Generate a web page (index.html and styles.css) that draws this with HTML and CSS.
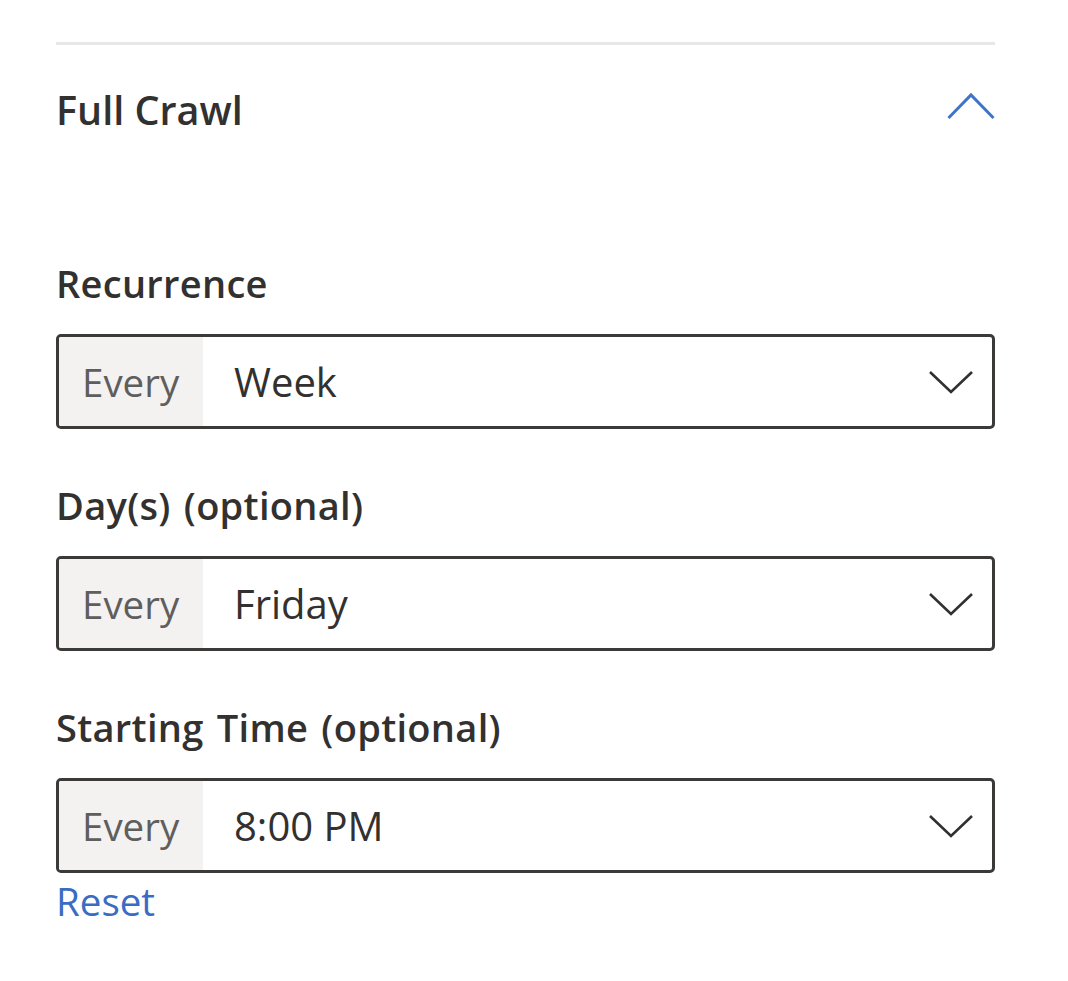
FILE: index.html
```html
<!DOCTYPE html>
<html lang="en">
<head>
<meta charset="utf-8">
<title>Full Crawl</title>
<link rel="stylesheet" href="styles.css">
</head>
<body>
<div class="panel">
  <div class="divider"></div>
  <div class="header">
    <h2 class="title">Full Crawl</h2>
    <button class="collapse" aria-label="Collapse">
      <svg width="48" height="28" viewBox="0 0 48 28"><path d="M1.5 26 L24 3 L46.5 26" fill="none" stroke="#3f74c9" stroke-width="3"/></svg>
    </button>
  </div>

  <div class="field first">
    <div class="label">Recurrence</div>
    <div class="select">
      <span class="prefix">Every</span>
      <span class="value">Week</span>
      <svg class="chev" width="44" height="24" viewBox="0 0 44 24"><path d="M1 2 L22 22 L43 2" fill="none" stroke="#323130" stroke-width="2.6"/></svg>
    </div>
  </div>

  <div class="field">
    <div class="label">Day(s) (optional)</div>
    <div class="select">
      <span class="prefix">Every</span>
      <span class="value">Friday</span>
      <svg class="chev" width="44" height="24" viewBox="0 0 44 24"><path d="M1 2 L22 22 L43 2" fill="none" stroke="#323130" stroke-width="2.6"/></svg>
    </div>
  </div>

  <div class="field">
    <div class="label">Starting Time (optional)</div>
    <div class="select">
      <span class="prefix">Every</span>
      <span class="value">8:00 PM</span>
      <svg class="chev" width="44" height="24" viewBox="0 0 44 24"><path d="M1 2 L22 22 L43 2" fill="none" stroke="#323130" stroke-width="2.6"/></svg>
    </div>
    <a class="reset" href="#">Reset</a>
  </div>
</div>
</body>
</html>
```
FILE: styles.css
```css
html, body {
  margin: 0;
  padding: 0;
  background: #ffffff;
}
body {
  font-family: "Open Sans", "Noto Sans", sans-serif;
  color: #323130;
}
.panel {
  width: 939px;
  margin-left: 56px;
  padding-top: 42px;
}
.divider {
  height: 3px;
  background: #e8e8e8;
}
.header {
  display: flex;
  align-items: center;
  justify-content: space-between;
  height: 130px;
}
.title {
  margin: 0;
  font-size: 39.5px;
  font-weight: 600;
  line-height: 56px;
}
.collapse {
  border: 0;
  padding: 0;
  background: none;
  display: flex;
  margin-top: -8px;
}
.field {
  display: flex;
  flex-direction: column;
  margin-top: 48px;
}
.field.first {
  margin-top: 80px;
}
.label {
  font-size: 38px;
  font-weight: 600;
  line-height: 57px;
  padding-bottom: 22px;
  word-spacing: 3px;
  letter-spacing: 0.3px;
}
.select {
  display: flex;
  align-items: stretch;
  height: 89px;
  border: 3px solid #3b3a39;
  border-radius: 5px;
  overflow: hidden;
}
.prefix {
  display: flex;
  align-items: center;
  padding: 0 24px 0 23px;
  width: 97px;
  background: #f3f2f1;
  color: #605e5c;
  font-size: 38.5px;
}
.value {
  flex: 1;
  display: flex;
  align-items: center;
  padding-left: 31px;
  font-size: 40px;
}
.chev {
  align-self: center;
  margin-right: 19px;
}
.reset {
  align-self: flex-start;
  font-size: 38.5px;
  line-height: 57px;
  color: #3a6cc4;
  text-decoration: none;
}
```
